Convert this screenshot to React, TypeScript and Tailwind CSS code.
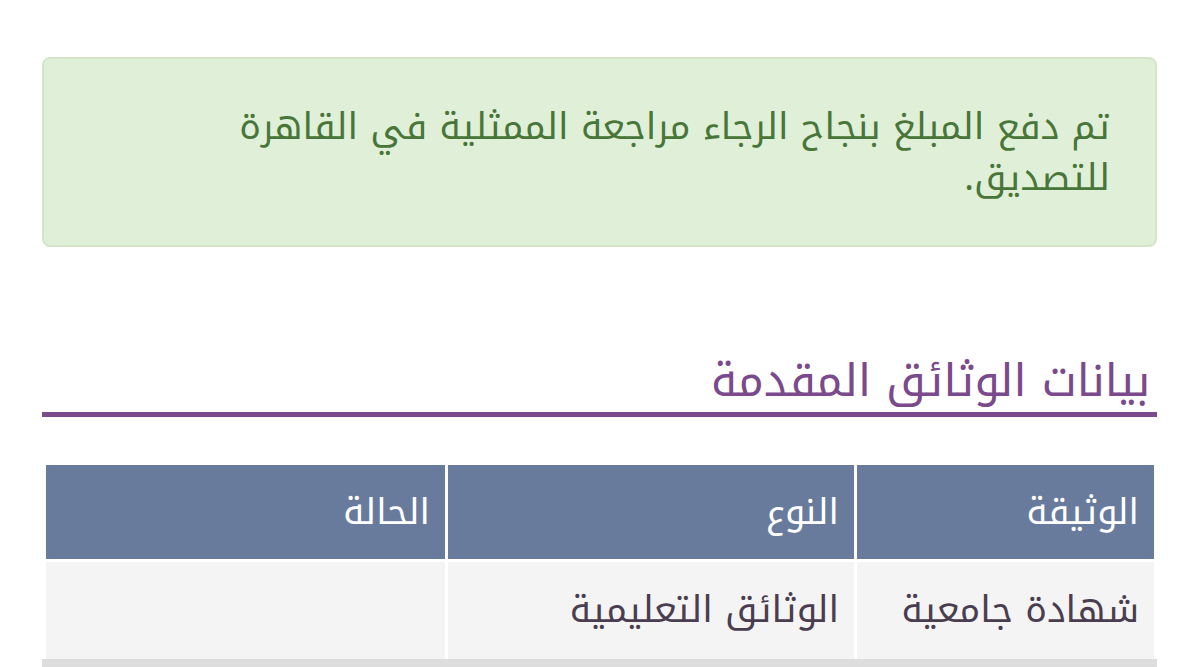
export default function App() {
  const font = { fontFamily: '"Noto Kufi Arabic", "Noto Sans Arabic", "DejaVu Sans", sans-serif' };

  return (
    <div dir="rtl" className="min-h-screen bg-white overflow-hidden" style={font}>
      <div className="w-[1115px] mr-[43px] pt-[57px]">
        {/* ALERT */}
        <div className="bg-[#e0efd8] border-2 border-[#d3e6c8] rounded-[8px] pr-[45px] pl-[60px] py-[42px] text-[#487639] text-[36.5px] leading-[51px]">
          تم دفع المبلغ بنجاح الرجاء مراجعة الممثلية في القاهرة للتصديق.
        </div>

        {/* HEADING */}
        <div className="mt-[103px] border-b-[5px] border-[#7a4a8c]">
          <h2 className="pr-[7px] text-[45px] leading-[62px] text-[#7a4a8c] tracking-[1px]">
            بيانات الوثائق المقدمة
          </h2>
        </div>

        {/* TABLE */}
        <div className="mt-[45px] p-[3px] pb-0">
          <div className="grid grid-cols-[297px_406px_399px] gap-[3px]">
            {["الوثيقة", "النوع", "الحالة"].map((h) => (
              <div
                key={h}
                className="h-[94px] bg-[#687b9d] text-white text-[36px] flex items-center pr-[15px]"
              >
                {h}
              </div>
            ))}
            {["شهادة جامعية", "الوثائق التعليمية", ""].map((c, i) => (
              <div
                key={i}
                className="h-[97px] bg-[#f4f4f4] text-[#4a3d4f] text-[36.5px] flex items-center pr-[15px]"
              >
                {c}
              </div>
            ))}
          </div>
        </div>
        <div className="h-[8px] bg-[#dddddd]" />
      </div>
    </div>
  );
}
